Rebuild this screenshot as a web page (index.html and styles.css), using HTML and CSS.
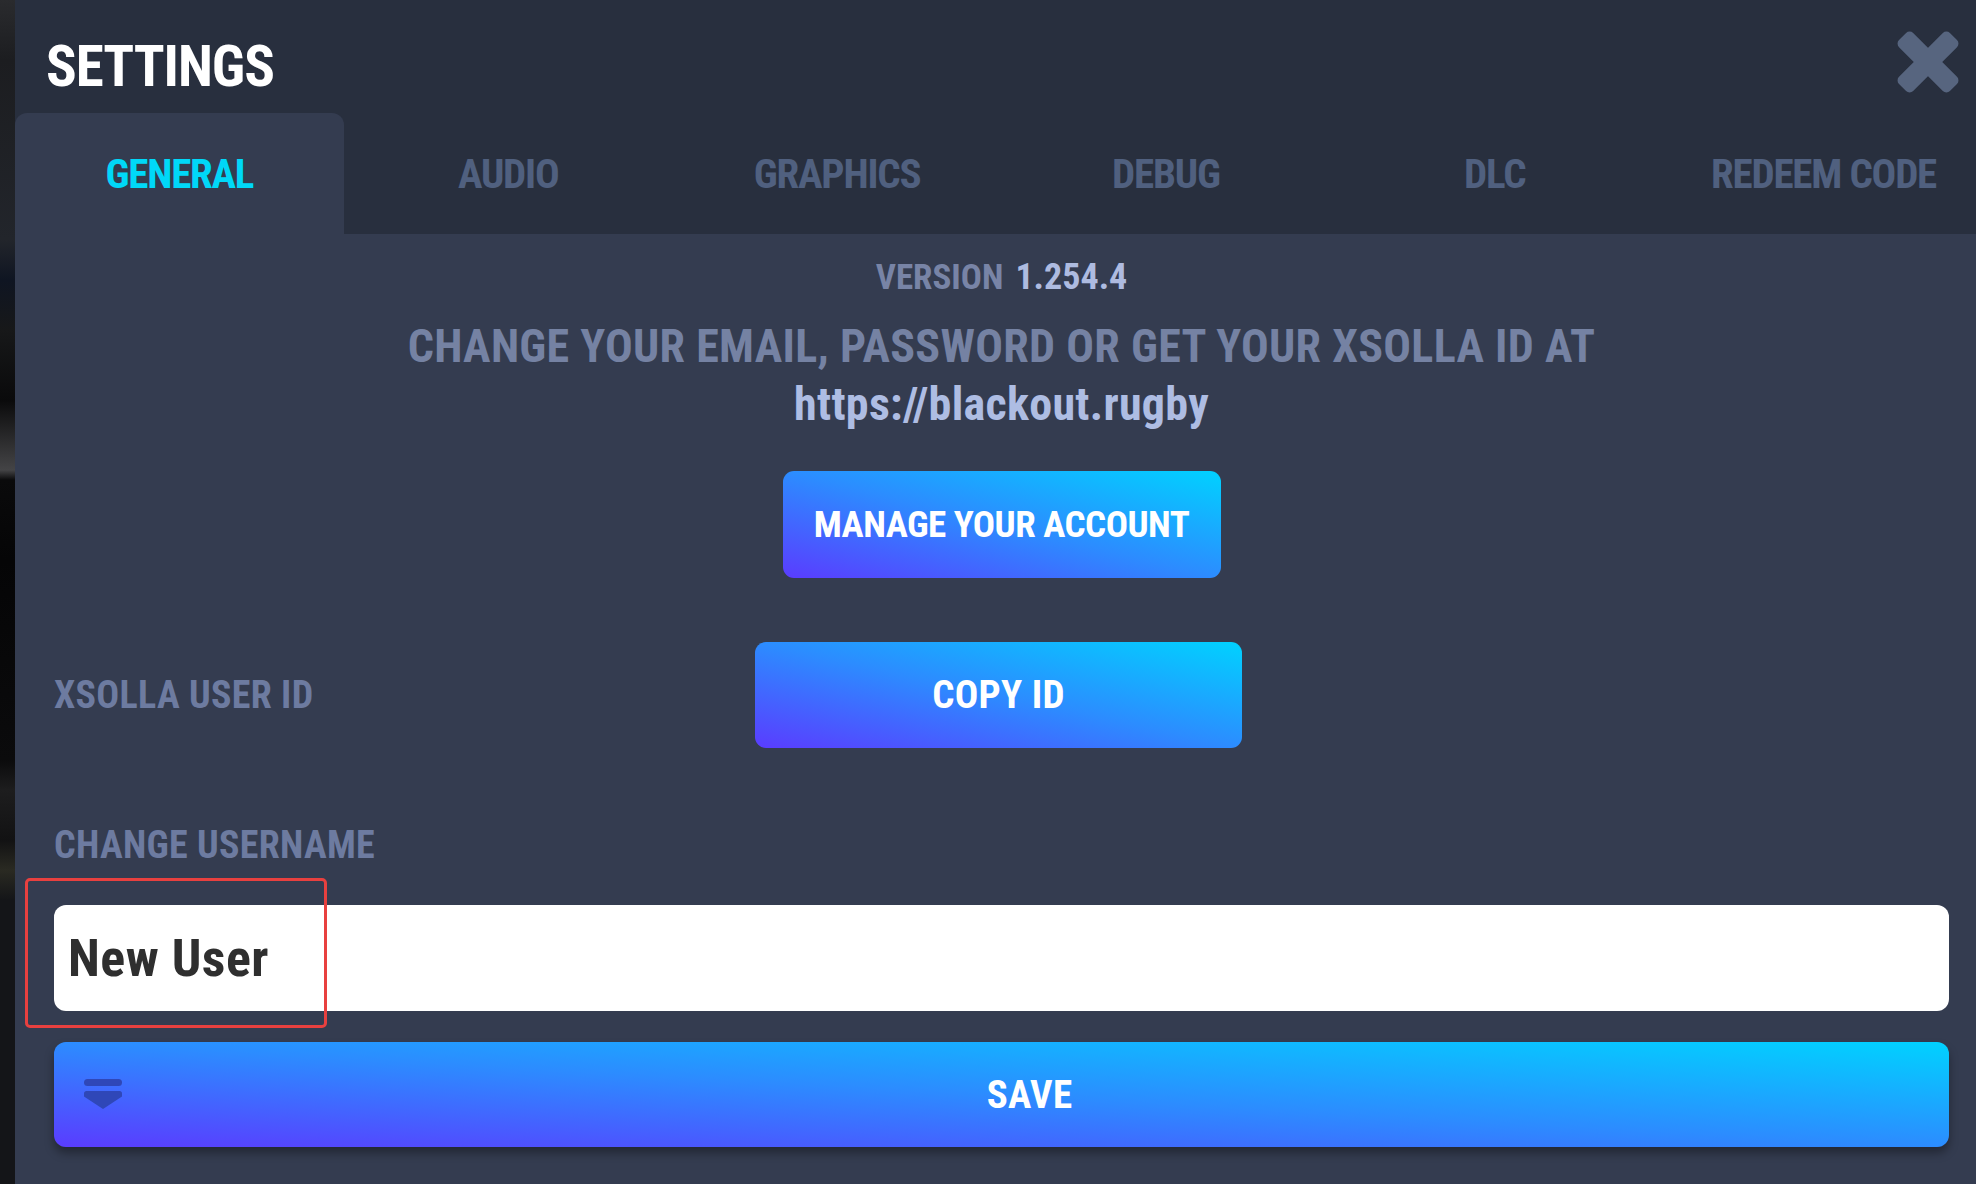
FILE: index.html
```html
<!DOCTYPE html>
<html lang="en">
<head>
<meta charset="utf-8">
<title>Settings</title>
<link rel="stylesheet" href="styles.css">
</head>
<body>
<div class="app">
  <div class="backdrop"></div>
  <div class="panel">
    <header class="header">
      <h1 class="title">SETTINGS</h1>
      <button class="close" aria-label="Close">
        <svg viewBox="0 0 66 66" width="66" height="66">
          <g fill="#57657f">
            <rect x="-3" y="23" width="72" height="20" rx="5" transform="rotate(45 33 33)"/>
            <rect x="-3" y="23" width="72" height="20" rx="5" transform="rotate(-45 33 33)"/>
          </g>
        </svg>
      </button>
    </header>
    <nav class="tabs">
      <div class="tab active">GENERAL</div>
      <div class="tab">AUDIO</div>
      <div class="tab">GRAPHICS</div>
      <div class="tab">DEBUG</div>
      <div class="tab">DLC</div>
      <div class="tab">REDEEM CODE</div>
    </nav>
    <main class="content">
      <div class="version"><span class="version-label">VERSION</span> <span class="version-num">1.254.4</span></div>
      <p class="info">CHANGE YOUR EMAIL, PASSWORD OR GET YOUR XSOLLA ID AT<br><span class="url">https://blackout.rugby</span></p>
      <div class="center-row"><button class="btn btn-manage">MANAGE YOUR ACCOUNT</button></div>
      <div class="id-row">
        <div class="label">XSOLLA USER ID</div>
        <button class="btn btn-copy">COPY ID</button>
        <div></div>
      </div>
      <div class="label label-username">CHANGE USERNAME</div>
      <div class="input">New User</div>
      <button class="btn btn-save">
        <svg class="save-icon" viewBox="0 0 38 30" width="38" height="30">
          <g fill="#2f47b8">
            <rect x="0" y="0" width="38" height="7" rx="3.5"/>
            <path d="M2.5 12 H35.5 Q38 12 38 14.5 V17.5 L19 30 L0 17.5 V14.5 Q0 12 2.5 12 Z"/>
          </g>
        </svg>
        <span>SAVE</span>
      </button>
    </main>
  </div>
</div>
<div class="highlight"></div>
</body>
</html>
```
FILE: styles.css
```css
* { box-sizing: border-box; }

html, body {
  margin: 0;
  padding: 0;
}

body {
  width: 1976px;
  height: 1184px;
  overflow: hidden;
  background: #141518;
  font-family: "Roboto Condensed", "Roboto", "Liberation Sans Narrow", sans-serif;
  font-stretch: condensed;
  font-weight: 700;
  position: relative;
}

.app {
  display: flex;
  height: 1184px;
}

.backdrop {
  flex: none;
  width: 15px;
  background: linear-gradient(to bottom,
    #2a2b2e 0px, #1c1d20 60px, #22252b 240px, #0f1522 280px, #171819 330px,
    #0a0a0b 400px, #444446 470px, #0a0a0b 480px, #050506 560px,
    #0b0b0c 760px, #1d1d1e 790px, #121213 840px, #2a2a22 870px, #141518 900px);
}

.panel {
  flex: none;
  width: 1973px;
  height: 1184px;
  background: #282f3e;
  display: flex;
  flex-direction: column;
}

.header {
  position: relative;
  height: 113px;
  flex: none;
  padding: 38px 0 0 31px;
}

.title {
  margin: 0;
  font-size: 57px;
  line-height: 57px;
  font-weight: 700;
  color: #ffffff;
  letter-spacing: -1px;
}

.close {
  position: absolute;
  top: 29px;
  right: 27px;
  width: 66px;
  height: 66px;
  padding: 0;
  border: 0;
  background: none;
  display: block;
}

.close svg { display: block; }

.tabs {
  display: flex;
  height: 121px;
  flex: none;
}

.tab {
  flex: 1 1 0;
  display: flex;
  align-items: center;
  justify-content: center;
  font-size: 41px;
  color: #50607f;
  letter-spacing: -1.2px;
  border-radius: 12px 12px 0 0;
}

.tab.active {
  background: #343c50;
  color: #00d8f8;
}

.content {
  flex: 1;
  background: #343c50;
  padding: 21px 39px 0 39px;
  display: flex;
  flex-direction: column;
}

.version {
  text-align: center;
  line-height: 44px;
  height: 44px;
  font-size: 35px;
}

.version-label { color: #7884a6; }
.version-num { color: #aebbe0; font-size: 36px; margin-left: 4px; }

.info {
  margin: 18px 0 0 0;
  text-align: center;
  font-size: 46px;
  line-height: 58px;
  color: #7582a3;
  letter-spacing: 0.3px;
}

.url { color: #aebde3; }

.center-row {
  display: flex;
  justify-content: center;
  margin-top: 38px;
}

.btn {
  border: 0;
  padding: 0;
  margin: 0;
  font-family: inherit;
  font-stretch: condensed;
  font-weight: 700;
  color: #ffffff;
  background: linear-gradient(to top right, #5a3cff 0%, #2c8cff 50%, #00d2ff 100%);
  border-radius: 11px;
  display: flex;
  align-items: center;
  justify-content: center;
}

.btn-manage {
  width: 438px;
  height: 107px;
  font-size: 37px;
  letter-spacing: -0.5px;
}

.id-row {
  margin-top: 64px;
  display: grid;
  grid-template-columns: 1fr auto 1fr;
  align-items: center;
}

.label {
  font-size: 38px;
  line-height: 44px;
  color: #6d7ba0;
  letter-spacing: 0.3px;
}

.btn-copy {
  width: 487px;
  height: 106px;
  font-size: 39px;
  letter-spacing: 0.3px;
  margin-left: -6px;
}

.label-username {
  margin-top: 75px;
}

.input {
  margin-top: 38px;
  height: 106px;
  background: #ffffff;
  border-radius: 12px;
  padding-left: 14px;
  display: flex;
  align-items: center;
  font-size: 52px;
  color: #2f2f2f;
  letter-spacing: 0.5px;
}

.btn-save {
  margin-top: 31px;
  height: 105px;
  width: 100%;
  position: relative;
  font-size: 39px;
  letter-spacing: 0.3px;
  padding-left: 56px;
  border-radius: 12px;
  box-shadow: 0 6px 10px rgba(0, 0, 0, 0.35);
}

.save-icon {
  position: absolute;
  left: 30px;
  top: 37px;
}

.highlight {
  position: absolute;
  left: 25px;
  top: 878px;
  width: 302px;
  height: 150px;
  border: 3px solid #e8403f;
  border-radius: 5px;
  pointer-events: none;
}
```
